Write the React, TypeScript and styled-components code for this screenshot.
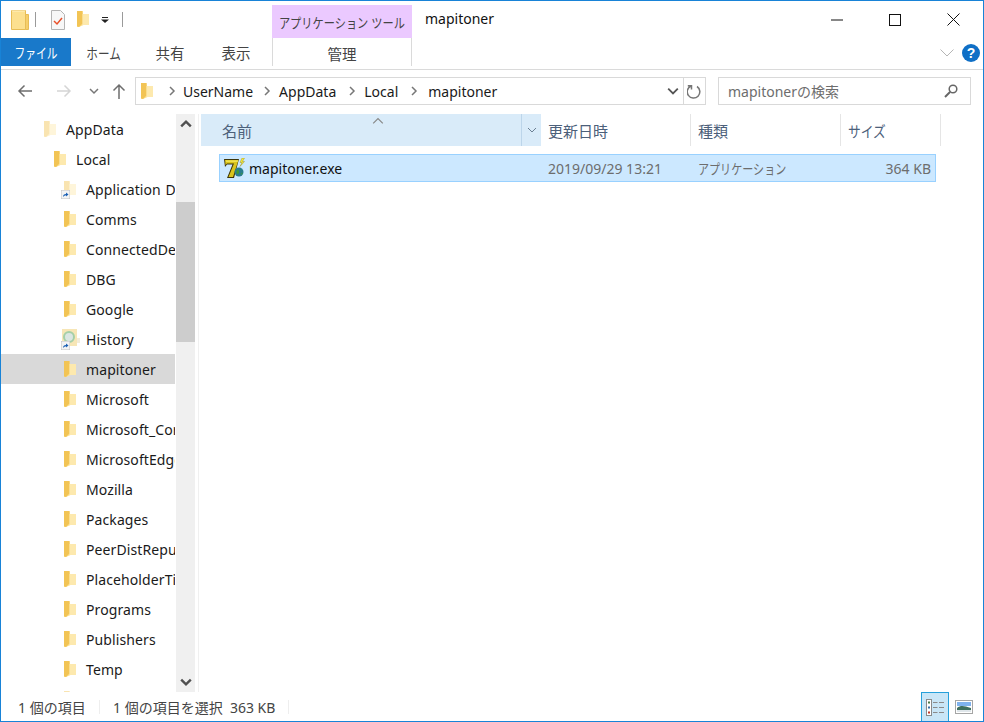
import React from 'react';
import styled, { createGlobalStyle } from 'styled-components';

const GlobalStyle = createGlobalStyle`
  html, body { margin: 0; padding: 0; background: #fff; }
  body { font-family: "Noto Sans", "Noto Sans CJK JP", sans-serif; }
`;

const Frame = styled.div`
  box-sizing: border-box;
  width: 984px;
  height: 722px;
  border: 1px solid #1883d7;
  display: flex;
  flex-direction: column;
  overflow: hidden;
  background: #fff;
`;

// the kana of the original UI font is much narrower than Noto's
const Kana = styled.span<{ $scale: number; $origin?: string }>`
  display: inline-block;
  white-space: nowrap;
  transform: scaleX(${({ $scale }) => $scale});
  transform-origin: ${({ $origin }) => $origin || 'center'};
`;

const TitleBar = styled.div`
  height: 37px;
  display: flex;
  flex: none;
`;

const QuickAccess = styled.div`
  width: 271px;
  display: flex;
  align-items: center;
  padding-left: 10px;
  box-sizing: border-box;
`;

const QuickSep = styled.span<{ $after: number }>`
  width: 1px;
  height: 15px;
  background: #9a9a9a;
  margin-left: ${({ $after }) => $after}px;
`;

const QuickIcon = styled.span<{ $left: number }>`
  display: flex;
  margin-left: ${({ $left }) => $left}px;
`;

const ToolsTab = styled.div`
  width: 140px;
  height: 33px;
  margin-top: 4px;
  background: #ebc9ff;
  color: #444;
  font-size: 13.5px;
  display: flex;
  align-items: center;
  justify-content: center;
  white-space: nowrap;
`;

const WindowTitle = styled.div`
  padding-left: 13px;
  font-size: 14px;
  line-height: 36px;
  color: #111;
`;

const WindowControls = styled.div`
  margin-left: auto;
  padding-right: 1px;
  display: flex;
`;

const ControlButton = styled.div`
  width: 58px;
  height: 37px;
  display: flex;
  align-items: center;
  justify-content: center;
`;

const RibbonTabs = styled.div`
  height: 32px;
  box-sizing: border-box;
  border-bottom: 1px solid #dadada;
  display: flex;
  flex: none;
  align-items: flex-start;
`;

const FileTab = styled.div`
  width: 70px;
  height: 28px;
  background: #1979ca;
  color: #fff;
  font-size: 14px;
  display: flex;
  align-items: center;
  justify-content: center;
`;

const RibbonTab = styled.div`
  width: 66px;
  height: 28px;
  color: #444;
  font-size: 14.5px;
  display: flex;
  align-items: center;
  justify-content: center;
`;

const ManageTab = styled.div`
  width: 138px;
  height: 24px;
  padding-top: 4px;
  margin-left: 3px;
  border-left: 1px solid #dadada;
  border-right: 1px solid #dadada;
  color: #444;
  font-size: 14.5px;
  text-align: center;
  line-height: 24px;
`;

const RibbonRight = styled.div`
  margin-left: auto;
  padding: 6px 3px 0 0;
  display: flex;
  align-items: center;
  gap: 8px;
`;

const AddressRow = styled.div`
  height: 44px;
  display: flex;
  flex: none;
  align-items: flex-start;
  padding-top: 7px;
  box-sizing: border-box;
`;

const NavButtons = styled.div`
  width: 134px;
  height: 28px;
  display: flex;
  align-items: center;
  padding-left: 4px;
  box-sizing: border-box;
`;

const NavButton = styled.span<{ $width: number }>`
  width: ${({ $width }) => $width}px;
  display: flex;
  justify-content: center;
`;

const AddressBar = styled.div`
  width: 571px;
  height: 28px;
  box-sizing: border-box;
  border: 1px solid #d9d9d9;
  display: flex;
  align-items: center;
`;

const Crumbs = styled.div`
  flex: 1;
  display: flex;
  align-items: center;
  padding-left: 5px;
  font-size: 14px;
  color: #1a1a1a;
`;

const Crumb = styled.span<{ $gap: number }>`
  margin-left: ${({ $gap }) => $gap}px;
`;

const CrumbArrow = styled.span<{ $gap: number }>`
  display: flex;
  margin-left: ${({ $gap }) => $gap}px;
`;

const AddressEnd = styled.div<{ $bordered?: boolean }>`
  width: 21px;
  height: 26px;
  display: flex;
  align-items: center;
  justify-content: center;
  border-left: ${({ $bordered }) => ($bordered ? '1px solid #d9d9d9' : 'none')};
`;

const SearchBox = styled.div`
  width: 253px;
  height: 28px;
  margin-left: 12px;
  box-sizing: border-box;
  border: 1px solid #d9d9d9;
  padding: 0 12px 0 9px;
  display: flex;
  align-items: center;
  justify-content: space-between;
  color: #6d6d6d;
  font-size: 14px;
`;

const Body = styled.div`
  flex: 1;
  min-height: 0;
  display: flex;
`;

const NavPane = styled.div`
  width: 174px;
  flex: none;
  overflow: hidden;
`;

const NavRow = styled.div<{ $depth: number; $selected?: boolean }>`
  height: 30px;
  display: flex;
  align-items: center;
  padding-left: ${({ $depth }) => 43 + $depth * 10}px;
  background: ${({ $selected }) => ($selected ? '#d9d9d9' : 'transparent')};
  font-size: 14px;
  word-spacing: 1px;
  letter-spacing: 0.1px;
  color: #1a1a1a;
  white-space: nowrap;
`;

const NavIcon = styled.span`
  width: 12px;
  margin-right: 10px;
  flex: none;
  display: flex;
  position: relative;
  svg { flex: none; }
`;

const HistoryWrap = styled.span`
  display: flex;
  margin-left: -3px;
`;

const ShortcutBadge = styled.span`
  position: absolute;
  left: -3px;
  bottom: -1px;
  display: flex;
`;

const Scrollbar = styled.div`
  width: 19px;
  margin-left: 1px;
  flex: none;
  background: #f0f0f0;
  display: flex;
  flex-direction: column;
`;

const ScrollArrow = styled.div<{ $end?: boolean }>`
  height: 20px;
  margin-top: ${({ $end }) => ($end ? 'auto' : '0')};
  display: flex;
  align-items: center;
  justify-content: center;
  flex: none;
`;

const ScrollThumb = styled.div`
  height: 140px;
  margin-top: 68px;
  background: #cdcdcd;
`;

const Divider = styled.div`
  width: 1px;
  margin-left: 3px;
  flex: none;
  background: #f0f0f0;
`;

const Content = styled.div`
  flex: 1;
  padding-left: 2px;
  display: flex;
  flex-direction: column;
`;

const Header = styled.div`
  height: 32px;
  display: flex;
  flex: none;
`;

const HeaderName = styled.div`
  width: 340px;
  background: #d9ebf9;
  display: flex;
  position: relative;
  color: #4c607a;
  font-size: 15px;
  align-items: center;
  padding-left: 21px;
  box-sizing: border-box;
`;

const SortCaret = styled.span`
  position: absolute;
  left: 171px;
  top: 1px;
  display: flex;
`;

const HeaderDrop = styled.span`
  margin-left: auto;
  width: 20px;
  height: 100%;
  border-left: 1px solid #bcd5ea;
  box-sizing: border-box;
  display: flex;
  align-items: center;
  justify-content: center;
`;

const HeaderCell = styled.div<{ $width: number }>`
  width: ${({ $width }) => $width}px;
  box-sizing: border-box;
  padding-left: 7px;
  border-right: 1px solid #e5e5e5;
  color: #4c607a;
  font-size: 15px;
  display: flex;
  align-items: center;
`;

const FileRow = styled.div`
  width: 717px;
  height: 28px;
  margin: 8px 0 0 18px;
  box-sizing: border-box;
  background: #cce8ff;
  border: 1px solid #99d1ff;
  display: flex;
  align-items: center;
  font-size: 14px;
`;

const FileName = styled.div`
  width: 321px;
  flex: none;
  display: flex;
  align-items: center;
  gap: 3px;
  padding-left: 4px;
  box-sizing: border-box;
  color: #111;
`;

const FileDetail = styled.div<{ $width: number; $right?: boolean }>`
  width: ${({ $width }) => $width}px;
  flex: none;
  box-sizing: border-box;
  padding-left: 7px;
  color: #6d6d6d;
  text-align: ${({ $right }) => ($right ? 'right' : 'left')};
  white-space: nowrap;
`;

const StatusBar = styled.div`
  height: 29px;
  flex: none;
  display: flex;
  align-items: center;
  font-size: 14px;
  color: #444;
`;

const StatusText = styled.span<{ $width: number; $pad: number }>`
  width: ${({ $width }) => $width}px;
  box-sizing: border-box;
  padding-left: ${({ $pad }) => $pad}px;
  white-space: pre;
  flex: none;
`;

const StatusSep = styled.span`
  width: 1px;
  height: 14px;
  background: #eee;
  flex: none;
`;

const ViewButtons = styled.div`
  margin-left: auto;
  padding-right: 10px;
  display: flex;
  align-items: center;
  gap: 6px;
  height: 100%;
`;

const ViewButton = styled.div<{ $active?: boolean }>`
  width: ${({ $active }) => ($active ? 28 : 18)}px;
  height: 100%;
  box-sizing: border-box;
  display: flex;
  align-items: center;
  justify-content: center;
  background: ${({ $active }) => ($active ? '#c9e6f7' : 'transparent')};
  border: ${({ $active }) => ($active ? '1px solid #26a0da' : 'none')};
  border-bottom: none;
`;

const Folder = ({ faded }: { faded?: boolean }) => (
  <svg width="12" height="17" viewBox="0 0 12 17" opacity={faded ? 0.45 : 1}>
    <path d="M0 0h5.5l.5 3H12v11H6.5L2 16l-2-.5z" fill="#fce08f" />
    <path d="M0 0h5.5v12.5L2 16l-2-.5z" fill="#f2c455" />
    <path d="M5.5 3H12v11H5.5z" fill="#fde9ae" />
  </svg>
);

const BigFolder = () => (
  <svg width="18" height="20" viewBox="0 0 18 20">
    <path d="M.5.5h14v19H.5z" fill="#fce08f" stroke="#e7bd56" />
    <path d="M14.5 4.5h3v15h-3z" fill="#f6cf6c" stroke="#e7bd56" />
    <path d="M.5.5h14l-1 1H1.500z" fill="#fff1c4" />
  </svg>
);

const CheckDoc = () => (
  <svg width="14" height="20" viewBox="0 0 14 20">
    <path d="M.5.5h9l4 4v15H.5z" fill="#f7f7f7" stroke="#b4b4b4" />
    <path d="M3 11l3 3 5-6" fill="none" stroke="#e8502a" strokeWidth="1.5" />
  </svg>
);

const Dropdown = () => (
  <svg width="8" height="6" viewBox="0 0 8 6">
    <path d="M1 0h6v1H1z" fill="#222" />
    <path d="M0 2.500h8L4 6z" fill="#222" />
  </svg>
);

const Shortcut = () => (
  <svg width="9" height="9" viewBox="0 0 9 9">
    <rect width="9" height="9" fill="#f3f3f3" stroke="#c2c2c2" />
    <path d="M2 7c0-2 1-3 3-3V2.500L7.500 4.500 5 6.500V5.200C4 5.200 3 6 2 7z" fill="#1a5fb4" />
  </svg>
);

const HistoryIcon = () => (
  <svg width="19" height="20" viewBox="0 0 19 20">
    <path d="M1 0h15v17H1z" fill="#f7e6b6" />
    <circle cx="8" cy="8" r="5" fill="#dbe6e2" stroke="#a5cfa8" strokeWidth="2" />
    <path d="M16 9h3v5h-3z" fill="#f3ecd9" />
  </svg>
);

const ExeIcon = () => (
  <svg width="22" height="21" viewBox="0 0 22 21">
    <path d="M0 1h15L10 20H3L8.500 6.500H3L1 9z" fill="#3d3406" />
    <path d="M1 2h13.500L9 19H4.500L10 5.500H3L1.500 7z" fill="#d9c41c" />
    <path d="M2 2.500h12l-.3 1.200H2z" fill="#f6ea60" />
    <path d="M18 0l-2 4.500h2L16 8.500l4.500-5h-2L20.500 0z" fill="#f5e93b" stroke="#8a7f14" strokeWidth=".4" />
    <circle cx="15" cy="14" r="4.500" fill="#2a7d8c" />
    <path d="M12.500 12.500c2-1 3 0 2.500 2s-2 1.500-2.500.5zM16.500 16l1.800-1.500v2z" fill="#3f9a3a" />
  </svg>
);

const Chevron = ({ dir, color, size = 10, width = 1.5 }: { dir: 'up' | 'down' | 'right'; color: string; size?: number; width?: number }) => {
  const paths = { up: 'M1 7l4-4 4 4', down: 'M1 3l4 4 4-4', right: 'M3 1l4 4-4 4' };
  return (
    <svg width={size} height={size} viewBox="0 0 10 10">
      <path d={paths[dir]} fill="none" stroke={color} strokeWidth={width} />
    </svg>
  );
};

const navItems: { name: string; depth: number; icon?: 'shortcut' | 'history'; faded?: boolean; selected?: boolean }[] = [
  { name: 'AppData', depth: 0, faded: true },
  { name: 'Local', depth: 1 },
  { name: 'Application Data', depth: 2, icon: 'shortcut', faded: true },
  { name: 'Comms', depth: 2 },
  { name: 'ConnectedDevicesPlatform', depth: 2 },
  { name: 'DBG', depth: 2 },
  { name: 'Google', depth: 2 },
  { name: 'History', depth: 2, icon: 'history' },
  { name: 'mapitoner', depth: 2, selected: true },
  { name: 'Microsoft', depth: 2 },
  { name: 'Microsoft_Corporation', depth: 2 },
  { name: 'MicrosoftEdge', depth: 2 },
  { name: 'Mozilla', depth: 2 },
  { name: 'Packages', depth: 2 },
  { name: 'PeerDistRepub', depth: 2 },
  { name: 'PlaceholderTileLogoFolder', depth: 2 },
  { name: 'Programs', depth: 2 },
  { name: 'Publishers', depth: 2 },
  { name: 'Temp', depth: 2 },
  { name: '', depth: 2, faded: true },
];

const App: React.FC = () => {
  return (
    <Frame>
      <GlobalStyle />
      <TitleBar>
        <QuickAccess>
          <BigFolder />
          <QuickSep $after={6} />
          <QuickIcon $left={15}><CheckDoc /></QuickIcon>
          <QuickIcon $left={12}><Folder /></QuickIcon>
          <QuickIcon $left={12}><Dropdown /></QuickIcon>
          <QuickSep $after={13} />
        </QuickAccess>
        <ToolsTab><Kana $scale={0.83}>アプリケーション ツール</Kana></ToolsTab>
        <WindowTitle>mapitoner</WindowTitle>
        <WindowControls>
          <ControlButton>
            <svg width="12" height="12" viewBox="0 0 12 12"><path d="M0 6h12" stroke="#111" /></svg>
          </ControlButton>
          <ControlButton>
            <svg width="12" height="12" viewBox="0 0 12 12"><rect x=".5" y=".5" width="11" height="11" fill="none" stroke="#111" /></svg>
          </ControlButton>
          <ControlButton>
            <svg width="13" height="13" viewBox="0 0 13 13"><path d="M.5.5l12 12M12.500.5l-12 12" stroke="#111" /></svg>
          </ControlButton>
        </WindowControls>
      </TitleBar>
      <RibbonTabs>
        <FileTab><Kana $scale={0.77}>ファイル</Kana></FileTab>
        <RibbonTab><Kana $scale={0.8}>ホーム</Kana></RibbonTab>
        <RibbonTab>共有</RibbonTab>
        <RibbonTab>表示</RibbonTab>
        <ManageTab>管理</ManageTab>
        <RibbonRight>
          <svg width="14" height="8" viewBox="0 0 14 8"><path d="M.5.500L7 7l6.500-6.500" fill="none" stroke="#b5b5b5" /></svg>
          <svg width="18" height="18" viewBox="0 0 18 18">
            <circle cx="9" cy="9" r="9" fill="#0f6fc6" />
            <text x="9" y="14" textAnchor="middle" fontSize="14" fontWeight="700" fill="#fff" fontFamily="'Liberation Sans', sans-serif">?</text>
          </svg>
        </RibbonRight>
      </RibbonTabs>
      <AddressRow>
        <NavButtons>
          <NavButton $width={40}>
            <svg width="16" height="14" viewBox="0 0 16 14"><path d="M15 7H2M7.500 1.500L2 7l5.500 5.500" fill="none" stroke="#6e6e6e" strokeWidth="1.500" /></svg>
          </NavButton>
          <NavButton $width={38}>
            <svg width="16" height="14" viewBox="0 0 16 14"><path d="M1 7h13M8.500 1.500L14 7l-5.500 5.500" fill="none" stroke="#d5d5d5" strokeWidth="1.500" /></svg>
          </NavButton>
          <NavButton $width={22}><Chevron dir="down" color="#777" /></NavButton>
          <NavButton $width={28}>
            <svg width="14" height="16" viewBox="0 0 14 16"><path d="M7 16V2M1.500 7.500L7 2l5.500 5.500" fill="none" stroke="#6e6e6e" strokeWidth="1.500" /></svg>
          </NavButton>
        </NavButtons>
        <AddressBar>
          <Crumbs>
            <Folder />
            <CrumbArrow $gap={14}><Chevron dir="right" color="#777" /></CrumbArrow>
            <Crumb $gap={6}>UserName</Crumb>
            <CrumbArrow $gap={9}><Chevron dir="right" color="#777" /></CrumbArrow>
            <Crumb $gap={7}>AppData</Crumb>
            <CrumbArrow $gap={11}><Chevron dir="right" color="#777" /></CrumbArrow>
            <Crumb $gap={7}>Local</Crumb>
            <CrumbArrow $gap={11}><Chevron dir="right" color="#777" /></CrumbArrow>
            <Crumb $gap={9}>mapitoner</Crumb>
          </Crumbs>
          <AddressEnd><Chevron dir="down" color="#555" size={12} /></AddressEnd>
          <AddressEnd $bordered>
            <svg width="15" height="15" viewBox="0 0 15 15"><path d="M4 1.500A6.300 6.300 0 1 0 10 2M4.500 5V1.200H.800" transform="translate(0 .5)" fill="none" stroke="#777" strokeWidth="1.500" /></svg>
          </AddressEnd>
        </AddressBar>
        <SearchBox>
          mapitonerの検索
          <svg width="14" height="14" viewBox="0 0 14 14"><circle cx="9" cy="5" r="3.800" fill="none" stroke="#666" strokeWidth="1.500" /><path d="M6 8l-5 5" stroke="#666" strokeWidth="2" /></svg>
        </SearchBox>
      </AddressRow>
      <Body>
        <NavPane>
          {navItems.map((item) => (
            <NavRow key={item.name} $depth={item.depth} $selected={item.selected}>
              <NavIcon>
                {item.icon === 'history' ? <HistoryWrap><HistoryIcon /></HistoryWrap> : <Folder faded={item.faded} />}
                {(item.icon === 'shortcut' || item.icon === 'history') && (
                  <ShortcutBadge><Shortcut /></ShortcutBadge>
                )}
              </NavIcon>
              {item.name}
            </NavRow>
          ))}
        </NavPane>
        <Scrollbar>
          <ScrollArrow><Chevron dir="up" color="#505050" size={12} width={2} /></ScrollArrow>
          <ScrollThumb />
          <ScrollArrow $end><Chevron dir="down" color="#505050" size={12} width={2} /></ScrollArrow>
        </Scrollbar>
        <Divider />
        <Content>
          <Header>
            <HeaderName>
              名前
              <SortCaret><Chevron dir="up" color="#888" size={12} width={1} /></SortCaret>
              <HeaderDrop><Chevron dir="down" color="#6b7f93" width={1} /></HeaderDrop>
            </HeaderName>
            <HeaderCell $width={150}>更新日時</HeaderCell>
            <HeaderCell $width={150}>種類</HeaderCell>
            <HeaderCell $width={100}><Kana $scale={0.85} $origin="left">サイズ</Kana></HeaderCell>
          </Header>
          <FileRow>
            <FileName><ExeIcon />mapitoner.exe</FileName>
            <FileDetail $width={150}>2019/09/29 13:21</FileDetail>
            <FileDetail $width={150}><Kana $scale={0.79} $origin="left">アプリケーション</Kana></FileDetail>
            <FileDetail $width={90} $right>364 KB</FileDetail>
          </FileRow>
        </Content>
      </Body>
      <StatusBar>
        <StatusText $width={98} $pad={17}>1 個の項目</StatusText>
        <StatusSep />
        <StatusText $width={188} $pad={13}>{'1 個の項目を選択  363 KB'}</StatusText>
        <StatusSep />
        <ViewButtons>
          <ViewButton $active>
            <svg width="18" height="17" viewBox="0 0 18 17">
              <rect x=".5" y=".5" width="5" height="16" fill="#fff" stroke="#8a8a8a" />
              <rect x="2" y="2.500" width="2" height="2" fill="#4a7a4a" />
              <rect x="2" y="7.500" width="2" height="2" fill="#3a6ea5" />
              <rect x="2" y="12.500" width="2" height="2" fill="#c0392b" />
              <path d="M7 3.500h4.500M13 3.500h5M7 8.500h4.500M13 8.500h5M7 13.500h4.500M13 13.500h5" stroke="#8a8a8a" />
            </svg>
          </ViewButton>
          <ViewButton>
            <svg width="18" height="14" viewBox="0 0 18 14">
              <rect x=".5" y=".5" width="17" height="13" fill="#fff" stroke="#a5a5a5" />
              <rect x="2" y="2" width="14" height="4" fill="#7fb2ee" />
              <path d="M2 8c4-3 7-2 14 0v2H2z" fill="#3f6f5f" />
              <rect x="2" y="10" width="14" height="2" fill="#dfe6ea" />
            </svg>
          </ViewButton>
        </ViewButtons>
      </StatusBar>
    </Frame>
  );
};

export default App;
